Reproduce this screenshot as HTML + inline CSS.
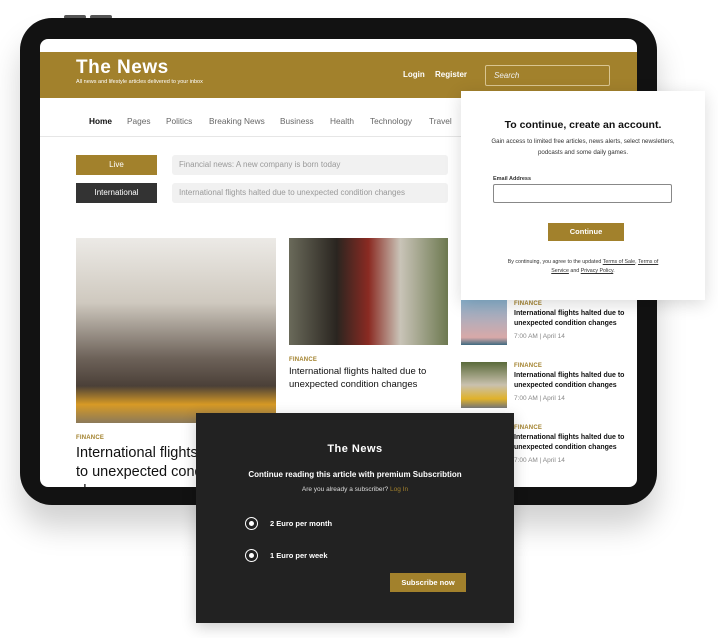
<!DOCTYPE html>
<html><head><style>
*{margin:0;padding:0;box-sizing:border-box}
body{width:718px;height:638px;background:#fff;position:relative;overflow:hidden;font-family:"Liberation Sans",sans-serif}
.a{position:absolute}
.frame{left:20px;top:18px;width:637px;height:487px;background:#121212;border-radius:32px;box-shadow:0 22px 30px rgba(0,0,0,.18)}
.screen{left:40px;top:39px;width:597px;height:448px;background:#fff;border-radius:8px;overflow:hidden}
.gold{background:#a2812c}
.t{white-space:nowrap}
.fin{font-size:6px;color:#a2812c;font-weight:bold;letter-spacing:.2px}
.h{font-size:7px;font-weight:bold;color:#111;line-height:10px}
.m{font-size:6.5px;color:#888}
.nv{position:absolute;top:77px;font-size:8.3px;color:#666;white-space:nowrap}
</style></head><body>
<div class="a" style="left:64px;top:15px;width:22px;height:4px;background:#555;border-radius:2px"></div>
<div class="a" style="left:90px;top:15px;width:22px;height:4px;background:#555;border-radius:2px"></div>
<div class="a frame"></div>
<div class="a screen">
 <div class="a gold" style="left:0;top:13px;width:597px;height:46px"></div>
 <div class="a t" style="left:36px;top:18px;font-size:19px;color:#fff;font-weight:bold;letter-spacing:.5px">The News</div>
 <div class="a t" style="left:36px;top:40px;font-size:5.5px;color:#fff">All news and lifestyle articles delivered to your inbox</div>
 <div class="a t" style="left:363px;top:31px;font-size:8px;color:#fff;font-weight:bold">Login</div>
 <div class="a t" style="left:395px;top:31px;font-size:8px;color:#fff;font-weight:bold">Register</div>
 <div class="a" style="left:445px;top:26px;width:125px;height:21px;border:1px solid #d9c590;border-radius:2px"></div>
 <div class="a t" style="left:454px;top:32px;font-size:8px;color:#eee;font-style:italic">Search</div>
 <div class="nv" style="left:49px;color:#111;font-weight:bold">Home</div>
 <div class="nv" style="left:87px">Pages</div>
 <div class="nv" style="left:126px">Politics</div>
 <div class="nv" style="left:169px">Breaking News</div>
 <div class="nv" style="left:240px">Business</div>
 <div class="nv" style="left:290px">Health</div>
 <div class="nv" style="left:330px">Technology</div>
 <div class="nv" style="left:389px">Travel</div>
 <div class="a" style="left:0;top:97px;width:597px;height:1px;background:#e6e6e6"></div>
 <div class="a gold t" style="left:36px;top:116px;width:81px;height:20px;color:#fff;font-size:8px;text-align:center;line-height:20px">Live</div>
 <div class="a t" style="left:36px;top:144px;width:81px;height:20px;background:#333;color:#fff;font-size:8px;text-align:center;line-height:20px">International</div>
 <div class="a t" style="left:132px;top:116px;width:276px;height:20px;background:#f1f1f1;border-radius:3px;color:#999;font-size:8px;line-height:20px;padding-left:7px">Financial news: A new company is born today</div>
 <div class="a t" style="left:132px;top:144px;width:276px;height:20px;background:#f1f1f1;border-radius:3px;color:#999;font-size:8px;line-height:20px;padding-left:7px">International flights halted due to unexpected condition changes</div>
 <div class="a" style="left:36px;top:199px;width:200px;height:185px;background:linear-gradient(180deg,#eceae6 0%,#cfc9bf 35%,#6d6259 65%,#4b4038 80%,#d79a25 90%,#8c7a5a 100%)"></div>
 <div class="a" style="left:249px;top:199px;width:159px;height:107px;background:linear-gradient(90deg,#6a6a5a 0%,#2a2520 30%,#8a2a22 50%,#c9c4b8 70%,#6d7950 100%)"></div>
 <div class="a fin t" style="left:249px;top:318px">FINANCE</div>
 <div class="a t" style="left:249px;top:327px;font-size:9.5px;line-height:12.5px;color:#111">International flights halted due to<br>unexpected condition changes</div>
 <div class="a fin t" style="left:36px;top:396px">FINANCE</div>
 <div class="a t" style="left:36px;top:405px;font-size:14.5px;line-height:19px;color:#111">International flights halted due<br>to unexpected condition changes<br>changes</div>
 <div class="a" style="left:421px;top:256px;width:46px;height:50px;background:linear-gradient(180deg,#7fb2d2,#d8a9a8 85%,#3f6a80)"></div>
 <div class="a" style="left:421px;top:323px;width:46px;height:46px;background:linear-gradient(180deg,#5a6a3a,#c9c1ae 50%,#e0b22a 80%,#777 100%)"></div>
 <div class="a fin t" style="left:474px;top:262px">FINANCE</div>
 <div class="a h t" style="left:474px;top:270px">International flights halted due to<br>unexpected condition changes</div>
 <div class="a m t" style="left:474px;top:294px">7:00 AM | April 14</div>
 <div class="a fin t" style="left:474px;top:324px">FINANCE</div>
 <div class="a h t" style="left:474px;top:332px">International flights halted due to<br>unexpected condition changes</div>
 <div class="a m t" style="left:474px;top:356px">7:00 AM | April 14</div>
 <div class="a fin t" style="left:474px;top:386px">FINANCE</div>
 <div class="a h t" style="left:474px;top:394px">International flights halted due to<br>unexpected condition changes</div>
 <div class="a m t" style="left:474px;top:418px">7:00 AM | April 14</div>
</div>
<div class="a" style="left:461px;top:91px;width:244px;height:209px;background:#fff;box-shadow:0 4px 16px rgba(0,0,0,.15)">
 <div class="a t" style="left:0;top:28px;width:244px;text-align:center;font-size:10.5px;font-weight:bold;color:#111">To continue, create an account.</div>
 <div class="a" style="left:20px;top:45px;width:204px;text-align:center;font-size:6.2px;line-height:11px;color:#333">Gain access to limited free articles, news alerts, select newsletters, podcasts and some daily games.</div>
 <div class="a t" style="left:32px;top:85px;font-size:5.5px;font-weight:bold;color:#333">Email Address</div>
 <div class="a" style="left:32px;top:93px;width:179px;height:19px;border:1px solid #888;border-radius:2px"></div>
 <div class="a gold t" style="left:87px;top:132px;width:76px;height:18px;color:#fff;font-size:7.5px;font-weight:bold;text-align:center;line-height:18px">Continue</div>
 <div class="a" style="left:38px;top:167px;width:168px;text-align:center;font-size:5.3px;line-height:9px;color:#333">By continuing, you agree to the updated <u>Terms of Sale</u>, <u>Terms of Service</u> and <u>Privacy Policy</u>.</div>
</div>
<div class="a" style="left:196px;top:413px;width:318px;height:210px;background:#222;box-shadow:0 4px 14px rgba(0,0,0,.2)">
 <div class="a t" style="left:0;top:30px;width:318px;text-align:center;font-size:11px;color:#fff;font-weight:bold;letter-spacing:.5px">The News</div>
 <div class="a t" style="left:0;top:57px;width:318px;text-align:center;font-size:8px;color:#fff;font-weight:bold">Continue reading this article with premium Subscribtion</div>
 <div class="a t" style="left:0;top:73px;width:318px;text-align:center;font-size:6.5px;color:#ddd">Are you already a subscriber? <span style="color:#a2812c">Log In</span></div>
 <div class="a" style="left:49px;top:104px;width:13px;height:13px;border:1.5px solid #fff;border-radius:50%"><div class="a" style="left:2.5px;top:2.5px;width:5px;height:5px;background:#fff;border-radius:50%"></div></div>
 <div class="a t" style="left:74px;top:106px;font-size:7.5px;color:#fff;font-weight:bold">2 Euro per month</div>
 <div class="a" style="left:49px;top:136px;width:13px;height:13px;border:1.5px solid #fff;border-radius:50%"><div class="a" style="left:2.5px;top:2.5px;width:5px;height:5px;background:#fff;border-radius:50%"></div></div>
 <div class="a t" style="left:74px;top:138px;font-size:7.5px;color:#fff;font-weight:bold">1 Euro per week</div>
 <div class="a gold t" style="left:194px;top:160px;width:76px;height:19px;color:#fff;font-size:7.5px;font-weight:bold;text-align:center;line-height:19px">Subscribe now</div>
</div>
</body></html>
